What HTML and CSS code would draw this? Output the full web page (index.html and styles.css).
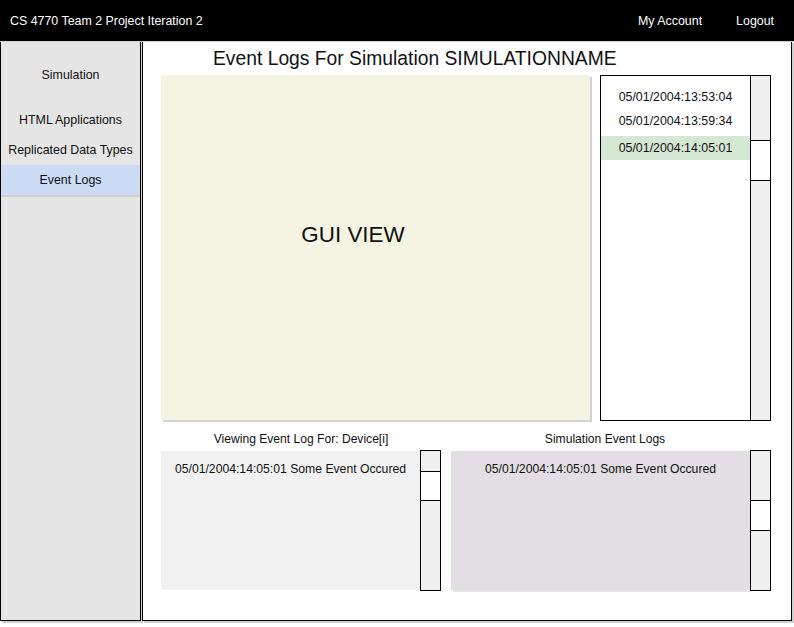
FILE: index.html
```html
<!DOCTYPE html>
<html>
<head>
<meta charset="utf-8">
<link rel="stylesheet" href="styles.css">
</head>
<body>
<div class="topbar">
  <div class="brand">CS 4770 Team 2 Project Iteration 2</div>
  <div class="toplinks"><span>My Account</span><span>Logout</span></div>
</div>
<div class="layout">
  <nav class="sidebar">
    <div class="nav-item first">Simulation</div>
    <div class="nav-item">HTML Applications</div>
    <div class="nav-item">Replicated Data Types</div>
    <div class="nav-item active">Event Logs</div>
  </nav>
  <main class="main">
    <h1 class="title">Event Logs For Simulation SIMULATIONNAME</h1>
    <div class="top-row">
      <div class="gui">GUI VIEW</div>
      <div class="list">
        <div class="list-items">
          <div class="row">05/01/2004:13:53:04</div>
          <div class="row">05/01/2004:13:59:34</div>
          <div class="row selected">05/01/2004:14:05:01</div>
        </div>
        <div class="vscroll inner"><div class="thumb thumb-list"></div></div>
      </div>
    </div>
    <div class="bottom-row">
      <div class="col col-left">
        <div class="label">Viewing Event Log For: Device[i]</div>
        <div class="logpane">
          <div class="logbox device">05/01/2004:14:05:01 Some Event Occured</div>
          <div class="vscroll boxed"><div class="thumb thumb-a"></div></div>
        </div>
      </div>
      <div class="col col-right">
        <div class="label label-right">Simulation Event Logs</div>
        <div class="logpane">
          <div class="logbox sim">05/01/2004:14:05:01 Some Event Occured</div>
          <div class="vscroll boxed"><div class="thumb thumb-b"></div></div>
        </div>
      </div>
    </div>
  </main>
</div>
</body>
</html>
```

FILE: styles.css
```css
* { box-sizing: border-box; margin: 0; padding: 0; }
body {
  margin: 0;
  width: 794px;
  height: 627px;
  background: #fff;
  font-family: "Liberation Sans", Arial, sans-serif;
  font-size: 12.4px;
  color: #111;
  overflow: hidden;
}
.topbar {
  height: 41px;
  background: #000;
  color: #fff;
  display: flex;
  align-items: center;
  justify-content: space-between;
  padding: 0 20px 0 10px;
  position: relative;
  z-index: 2;
  box-shadow: 0 1px 0 #cfcfcf;
}
.toplinks { display: flex; gap: 34px; }
.layout {
  display: flex;
  height: 582px;
}
.sidebar {
  width: 141px;
  height: 580px;
  background: #e5e5e5;
  border: 1px solid #000;
  border-top: none;
  box-shadow: 2px 2px 0 #cfcfcf;
  padding-top: 19px;
}
.nav-item {
  height: 30px;
  line-height: 30px;
  text-align: center;
}
.nav-item.first { margin-bottom: 15px; }
.nav-item.active {
  background: #ccdcf5;
  box-shadow: 0 2px 0 #d0d0d0;
}
.main {
  margin-left: 1px;
  width: 650px;
  height: 580px;
  border: 1px solid #000;
  border-top: 1px solid #d5d5d5;
  box-shadow: 2px 2px 0 #cfcfcf;
  padding-left: 18px;
}
.title {
  font-weight: normal;
  font-size: 19.3px;
  height: 34px;
  line-height: 34px;
  padding-left: 52px;
}
.top-row {
  display: flex;
  gap: 10px;
  margin-top: -1px;
}
.gui {
  width: 429px;
  height: 345px;
  background: #f5f3e2;
  box-shadow: 2px 2px 0 #d3d3d3;
  display: flex;
  align-items: center;
  justify-content: center;
  font-size: 22.4px;
  padding-bottom: 26px;
  padding-right: 45px;
}
.list {
  width: 171px;
  height: 346px;
  border: 1px solid #000;
  display: flex;
}
.list-items {
  flex: 1;
  padding-top: 9px;
}
.row {
  height: 24px;
  line-height: 24px;
  text-align: center;
}
.row.selected {
  margin-top: 3px;
  background: #d5e8d4;
}
.vscroll {
  width: 20px;
  background: #f0f0f0;
}
.vscroll.inner {
  border-left: 1px solid #000;
}
.vscroll.boxed {
  width: 21px;
  height: 141px;
  border: 1px solid #000;
}
.thumb {
  background: #fff;
  border-top: 1px solid #000;
  border-bottom: 1px solid #000;
}
.thumb-list { margin-top: 64px; height: 41px; }
.thumb-a { margin-top: 20px; height: 30px; }
.thumb-b { margin-top: 49px; height: 31px; }
.bottom-row {
  display: flex;
  gap: 10px;
}
.col-left { width: 280px; }
.col-right { width: 320px; }
.label {
  margin-top: 9px;
  margin-bottom: 2px;
  height: 18px;
  line-height: 18px;
  text-align: center;
  font-size: 12.1px;
}
.label-right { padding-right: 12px; }
.logpane {
  display: flex;
}
.logbox {
  flex: 1;
  margin-top: 1px;
  height: 139px;
  text-align: center;
  padding-top: 11px;
  line-height: 14px;
  font-size: 12.2px;
}
.logbox.device { background: #f1f1f1; }
.logbox.sim {
  background: #e3dee4;
  box-shadow: 2px 2px 0 #e6e6e6;
}
```
